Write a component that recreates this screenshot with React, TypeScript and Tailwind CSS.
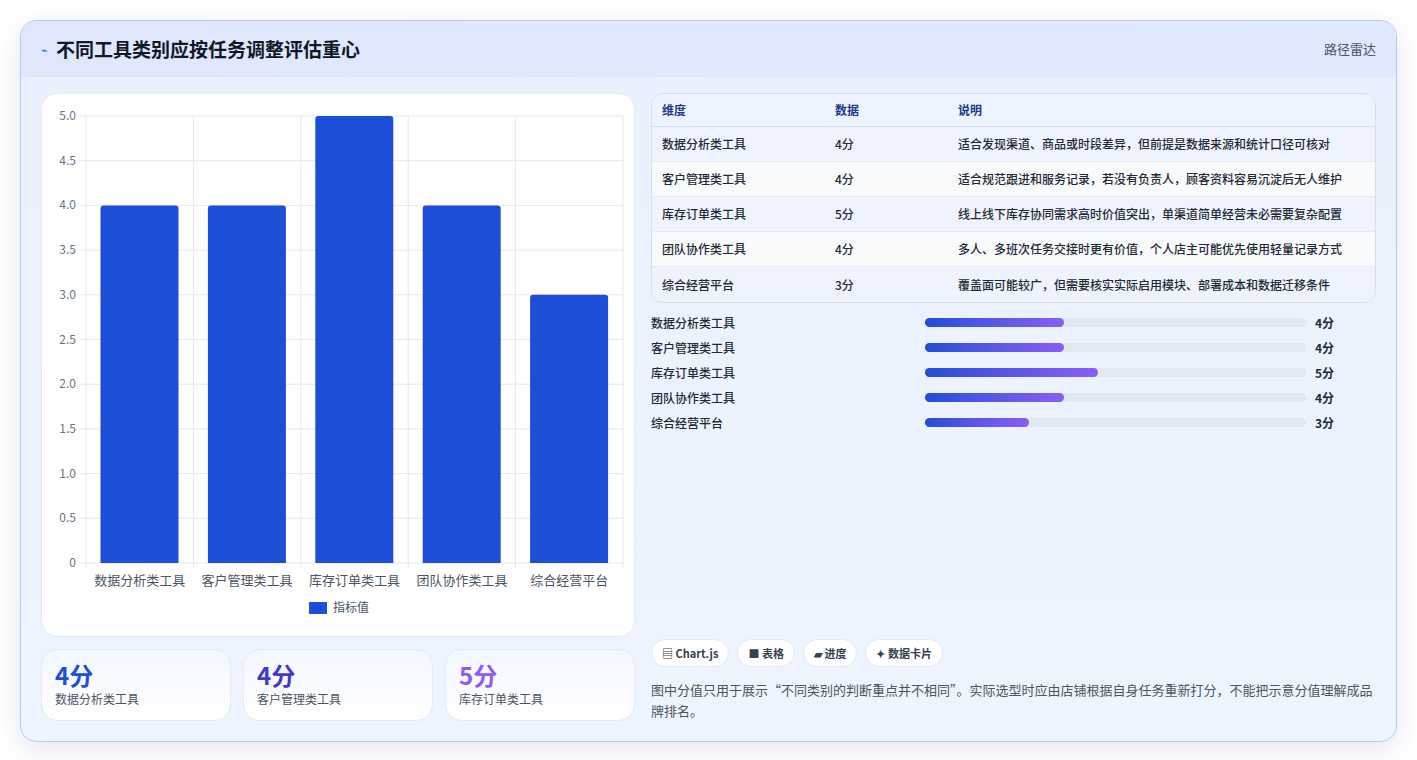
import React from "react"

const items = [
  { name: "数据分析类工具", v: 4, note: "适合发现渠道、商品或时段差异，但前提是数据来源和统计口径可核对" },
  { name: "客户管理类工具", v: 4, note: "适合规范跟进和服务记录，若没有负责人，顾客资料容易沉淀后无人维护" },
  { name: "库存订单类工具", v: 5, note: "线上线下库存协同需求高时价值突出，单渠道简单经营未必需要复杂配置" },
  { name: "团队协作类工具", v: 4, note: "多人、多班次任务交接时更有价值，个人店主可能优先使用轻量记录方式" },
  { name: "综合经营平台", v: 3, note: "覆盖面可能较广，但需要核实实际启用模块、部署成本和数据迁移条件" },
]

function BarChart() {
  const x0 = 44, x1 = 581, y0 = 22, y1 = 469
  const h = y1 - y0
  const cw = (x1 - x0) / 5
  const ticks = [0, 0.5, 1, 1.5, 2, 2.5, 3, 3.5, 4, 4.5, 5]
  return (
    <svg width="594" height="543" className="block">
      {ticks.map((t) => {
        const y = y1 - (t / 5) * h
        return (
          <g key={t}>
            <line x1={x0 - 6} x2={x1} y1={y} y2={y} stroke="#e5e7eb" />
            <text x={x0 - 10} y={y + 4} textAnchor="end" fontSize="12" fill="#6b7280">
              {t === 0 ? "0" : t.toFixed(1)}
            </text>
          </g>
        )
      })}
      {[0, 1, 2, 3, 4, 5].map((i) => (
        <line key={i} x1={x0 + i * cw} x2={x0 + i * cw} y1={y0} y2={y1 + 6} stroke="#e5e7eb" />
      ))}
      {items.map((it, i) => {
        const bh = (it.v / 5) * h
        const bx = x0 + i * cw + 14.5
        return (
          <g key={it.name}>
            <path
              d={`M${bx} ${y1} V${y1 - bh + 3} Q${bx} ${y1 - bh} ${bx + 3} ${y1 - bh} H${bx + 75} Q${bx + 78} ${y1 - bh} ${bx + 78} ${y1 - bh + 3} V${y1} Z`}
              fill="#1d4ed8"
            />
            <text x={x0 + i * cw + cw / 2} y={y1 + 22} textAnchor="middle" fontSize="13" fill="#4b5563">
              {it.name}
            </text>
          </g>
        )
      })}
      <rect x="267" y="508" width="18" height="12" fill="#1d4ed8" />
      <text x="291" y="518" fontSize="12" fill="#4b5563">指标值</text>
    </svg>
  )
}

export default function App() {
  return (
    <div className="min-h-screen bg-white p-5" style={{ fontFamily: '"Noto Sans CJK SC", "Noto Sans", sans-serif' }}>
      <div className="overflow-hidden rounded-2xl border border-[#b9c8ef] bg-gradient-to-b from-[#eaf0fd] to-[#eef5ff] shadow-[0_8px_24px_rgba(30,60,140,0.12)]">
        <div className="flex h-[56px] items-center justify-between bg-gradient-to-r from-[#e0e7fd] to-[#dfe9fd] px-5">
          <div className="flex items-center gap-2">
            <span className="text-[11px] text-[#2563eb]">⌁</span>
            <span className="text-[19px] font-bold text-[#111827]">不同工具类别应按任务调整评估重心</span>
          </div>
          <span className="text-[13px] text-[#4b5563]">路径雷达</span>
        </div>
        <div className="flex gap-4 px-5 pb-5 pt-4">
          <div className="flex w-[594px] flex-col gap-3">
            <div className="h-[544px] rounded-2xl border border-[#e3e9f6] bg-white">
              <BarChart />
            </div>
            <div className="grid grid-cols-3 gap-3">
              {items.slice(0, 3).map((it, i) => (
                <div key={it.name} className="h-[72px] rounded-2xl border border-[#e3e9f6] bg-gradient-to-b from-[#f3f7ff] to-white px-[13px] pt-[10px]">
                  <div className={`text-[24px] font-bold leading-[30px] ${i === 0 ? "text-[#1d4ed8]" : i === 1 ? "text-[#4338ca]" : "text-[#8b5cf6]"}`}>{it.v}分</div>
                  <div className="text-[12px] text-[#4b5563]">{it.name}</div>
                </div>
              ))}
            </div>
          </div>
          <div className="flex flex-1 flex-col">
            <div className="overflow-hidden rounded-xl border border-[#d6dff0] text-[12px]">
              <div className="flex h-[33px] items-center border-b border-[#d6dff0] bg-[#eef4ff] font-bold text-[#1e3a8a]">
                <span className="w-[174px] pl-[10px]">维度</span>
                <span className="w-[132px] pl-[9px]">数据</span>
                <span>说明</span>
              </div>
              {items.map((it, i) => (
                <div key={it.name} className={`flex h-[35px] items-center font-medium text-[#1f2937] ${i % 2 ? "bg-[#f8fafc]" : "bg-[#eef3fd]"} ${i < 4 ? "border-b border-[#e5eaf3]" : ""}`}>
                  <span className="w-[174px] pl-[10px]">{it.name}</span>
                  <span className="w-[132px] pl-[9px]">{it.v}分</span>
                  <span>{it.note}</span>
                </div>
              ))}
            </div>
            <div className="mt-[10px] flex flex-col gap-[6px]">
              {items.map((it) => (
                <div key={it.name} className="flex h-[19px] items-center text-[12px]">
                  <span className="w-[274px] font-medium text-[#1f2937]">{it.name}</span>
                  <div className="h-[9px] w-[381px] rounded-full bg-[#e2e8f0]">
                    <div className="h-full rounded-full bg-gradient-to-r from-[#1d4ed8] to-[#8b5cf6]" style={{ width: `${(it.v / 11) * 100}%` }} />
                  </div>
                  <span className="ml-[9px] font-bold text-[#1f2937]">{it.v}分</span>
                </div>
              ))}
            </div>
            <div className="flex-1" />
            <div className="flex gap-2 text-[11px] font-bold text-[#374151]">
              {["▤ Chart.js", "■ 表格", "▰ 进度", "✦ 数据卡片"].map((c) => (
                <span key={c} className="flex h-[28px] items-center rounded-full border border-[#e3e9f6] bg-white px-[10px]">{c}</span>
              ))}
            </div>
            <p className="mt-[12px] text-[13px] leading-[21px] text-[#4b5563]">
              图中分值只用于展示“不同类别的判断重点并不相同”。实际选型时应由店铺根据自身任务重新打分，不能把示意分值理解成品牌排名。
            </p>
          </div>
        </div>
      </div>
    </div>
  )
}
